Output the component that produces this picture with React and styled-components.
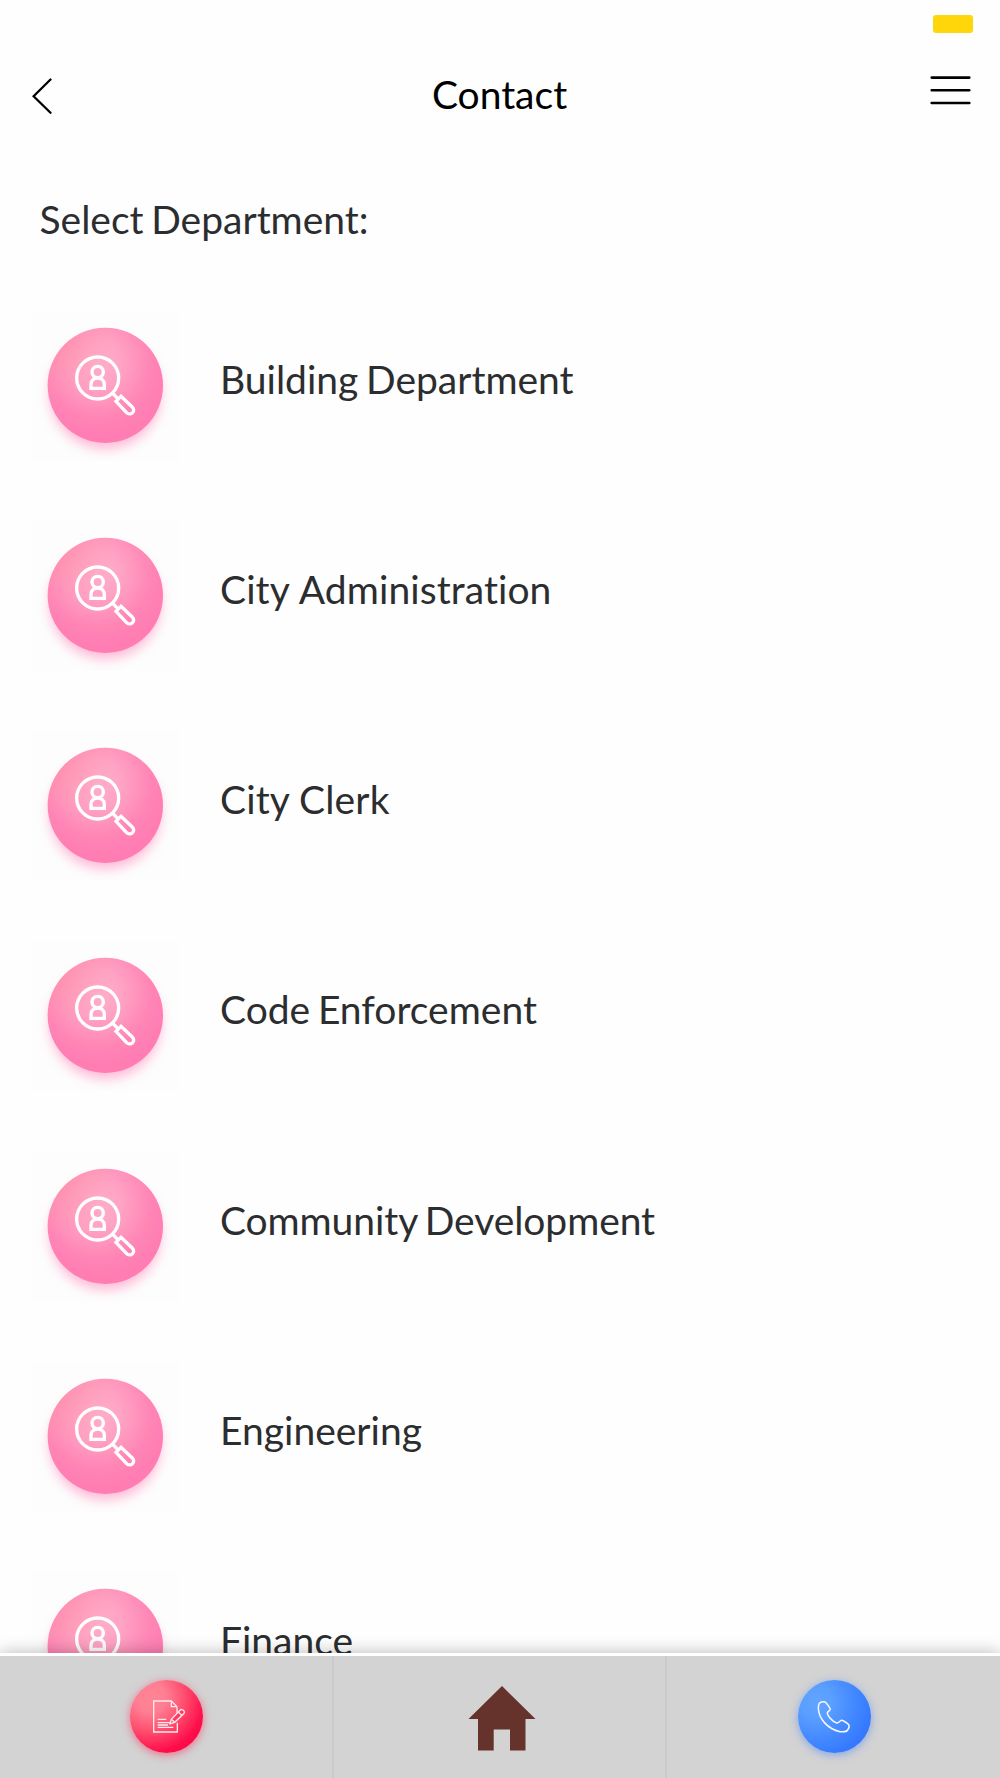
import React from "react";
import styled, { createGlobalStyle } from "styled-components";

const GlobalStyle = createGlobalStyle`
  * { box-sizing: border-box; }
  body { margin: 0; background: #fefefe; }
`;

const Screen = styled.div`
  display: flex;
  flex-direction: column;
  width: 1000px;
  height: 1778px;
  overflow: hidden;
  background: #fefefe;
  color: #2b2d2f;
  font-family: Lato, "Liberation Sans", sans-serif;
  font-size: 39px;
  font-variant-ligatures: none;
  word-spacing: -2.3px;
`;

const StatusBar = styled.div`
  display: flex;
  justify-content: flex-end;
  height: 48px;
  padding: 15px 27px 0 0;
`;

const Battery = styled.span`
  width: 40px;
  height: 18px;
  border-radius: 3px;
  background: #ffd60a;
`;

const Header = styled.header`
  display: grid;
  grid-template-columns: 120px 1fr 120px;
  height: 92px;
  color: #000;
`;

const IconButton = styled.button`
  display: flex;
  justify-content: ${(p) => (p.$end ? "flex-end" : "flex-start")};
  align-items: flex-start;
  padding: 28px 29px 0 31.5px;
  border: 0;
  background: none;
  color: inherit;
`;

const Title = styled.h1`
  margin: 0;
  padding-right: 1px;
  text-align: center;
  font-size: 39px;
  font-weight: 400;
  line-height: 93px;
`;

const Content = styled.main`
  flex: 1;
  min-height: 0;
  overflow: hidden;
`;

const Prompt = styled.p`
  margin: 0;
  height: 171px;
  padding: 49px 0 0 39.5px;
  line-height: 61px;
`;

const List = styled.ul`
  margin: 0;
  padding: 0 0 0 31px;
  list-style: none;
`;

const Row = styled.li`
  display: flex;
  gap: 41px;
  height: 210.15px;
`;

const Label = styled.span`
  line-height: 137px;
  word-spacing: ${(p) => p.$space ?? -2.3}px;
  letter-spacing: ${(p) => p.$track ?? 0}px;
`;

const Tile = styled.span`
  display: flex;
  width: 148px;
  height: 150px;
  background: #fdfdfd;
`;

const TabBar = styled.footer`
  display: grid;
  grid-template-columns: 333.5px 333.5px 333px;
  flex: none;
  position: relative;
  height: 125.5px;
  border-top: 3.5px solid #fff;
  background: #d3d3d3;
  box-shadow: 0 0 16px rgba(0, 0, 0, 0.28);
`;

const Tab = styled.a`
  display: flex;
  justify-content: center;
  padding-top: ${(p) => p.$top}px;
  padding-left: ${(p) => p.$shift || 0}px;
  border-right: ${(p) => (p.$last ? "0" : "2px solid #cbcbcb")};
`;

const Badge = styled.span`
  display: flex;
  width: 73px;
  height: 73px;
  border-radius: 50%;
  background: ${(p) => p.$fill};
  box-shadow: 0 2px 8px ${(p) => p.$glow};
`;

function SearchPersonIcon() {
  return (
    <svg width="148" height="150" viewBox="33 33 444 450" fill="none">
      <defs>
        <radialGradient id="pink" gradientUnits="userSpaceOnUse" cx="232" cy="190" r="215">
          <stop offset="0" stopColor="#ffb0cc" />
          <stop offset="0.35" stopColor="#ffa2c3" />
          <stop offset="0.75" stopColor="#ff85b5" />
          <stop offset="1" stopColor="#ff7db3" />
        </radialGradient>
        <radialGradient id="blush" gradientUnits="userSpaceOnUse" cx="120" cy="125" r="160">
          <stop offset="0" stopColor="#ff8fa8" stopOpacity="0.6" />
          <stop offset="1" stopColor="#ff8fa8" stopOpacity="0" />
        </radialGradient>
        <filter id="glow" x="-30%" y="-30%" width="160%" height="160%">
          <feGaussianBlur stdDeviation="17" />
        </filter>
      </defs>
      <circle cx="256" cy="280" r="168" fill="#ff86b8" opacity="0.55" filter="url(#glow)" />
      <circle cx="256" cy="256" r="173" fill="url(#pink)" />
      <circle cx="256" cy="256" r="173" fill="url(#blush)" />
      <g stroke="#fff" strokeWidth="10">
        <circle cx="233" cy="234" r="63" />
        <circle cx="233" cy="216" r="17" />
        <path d="M213 265V253C213 228 253 228 253 253V265Z" />
        <path d="M277 279L293 295" />
        <path d="M288 304L303 289L336 320C350 334 331 350 319 337Z" />
      </g>
    </svg>
  );
}

function NoteIcon() {
  return (
    <svg width="73" height="73" viewBox="58 60 219 219" fill="none" stroke="#ffe9ee" strokeWidth="4">
      <path d="M200 188V216H129V123H182L199 140V158M182 123V140H199" />
      <path d="M141 178H167M141 188H178M141 195H172M141 202H188" />
      <path d="M178 191L182 178L208 151C213 144 226 154 219 161L192 187Z" fill="#ff3a60" />
      <path d="M203 156L213 166M182 178L192 187" />
    </svg>
  );
}

function PhoneIcon() {
  return (
    <svg width="73" height="73" viewBox="54 60 219 219" fill="none" stroke="#f4f8ff" strokeWidth="4.5" strokeLinejoin="round">
      <path d="M118 130C123 124 133 124 138 128C144 134 148 141 151 147C152 151 143 154 142 159C142 168 160 187 170 189C176 190 179 182 185 181C190 182 202 189 206 194C209 199 206 206 203 210C200 215 188 216 180 215C143 207 116 176 115 145C115 139 115 134 118 130Z" />
    </svg>
  );
}

const departments = [
  { name: "Building Department" },
  { name: "City Administration", space: 1.2, track: 0.08 },
  { name: "City Clerk", space: -0.2, track: 0.14 },
  { name: "Code Enforcement" },
  { name: "Community Development", track: -0.08 },
  { name: "Engineering" },
  { name: "Finance" },
];

export default function App() {
  return (
    <Screen>
      <GlobalStyle />
      <StatusBar>
        <Battery />
      </StatusBar>
      <Header>
        <IconButton aria-label="Back">
          <svg width="22" height="42" viewBox="0 0 22 42" fill="none" stroke="#000" strokeWidth="2.3">
            <path d="M18.5 3.5L1.6 20.2L18.5 36.8" strokeLinecap="round" />
          </svg>
        </IconButton>
        <Title>Contact</Title>
        <IconButton aria-label="Menu" $end>
          <svg width="41" height="30" viewBox="0 0 41 30" stroke="#000" strokeWidth="2.6" strokeLinecap="round">
            <path d="M1.7 1.6H39.3M1.7 14.3H39.3M1.7 27H39.3" />
          </svg>
        </IconButton>
      </Header>
      <Content>
        <Prompt>Select Department:</Prompt>
        <List>
          {departments.map(({ name, space, track }) => (
            <Row key={name}>
              <Tile>
                <SearchPersonIcon />
              </Tile>
              <Label $space={space} $track={track}>
                {name}
              </Label>
            </Row>
          ))}
        </List>
      </Content>
      <TabBar>
        <Tab aria-label="Report" $top={24} $shift={1}>
          <Badge
            $fill="radial-gradient(circle at 28% 24%, #ff8594 0%, #ff7f92 20%, #ff4d6e 45%, #ff0d4a 72%, #ff0040 100%)"
            $glow="rgba(255, 30, 80, 0.55)"
          >
            <NoteIcon />
          </Badge>
        </Tab>
        <Tab aria-label="Home" $top={30} $shift={5}>
          <svg width="68" height="66" viewBox="0 0 68 66">
            <path d="M34 0L67.5 33H57.5V64.5H42V43.5H25.7V64.5H10V33H0.5Z" fill="#66322c" />
          </svg>
        </Tab>
        <Tab aria-label="Call" $top={24} $shift={1} $last>
          <Badge
            $fill="radial-gradient(circle at 25% 30%, #62a5ff 0%, #5b9fff 20%, #4489ff 50%, #3176ff 80%, #2d70ff 100%)"
            $glow="rgba(50, 120, 255, 0.5)"
          >
            <PhoneIcon />
          </Badge>
        </Tab>
      </TabBar>
    </Screen>
  );
}
